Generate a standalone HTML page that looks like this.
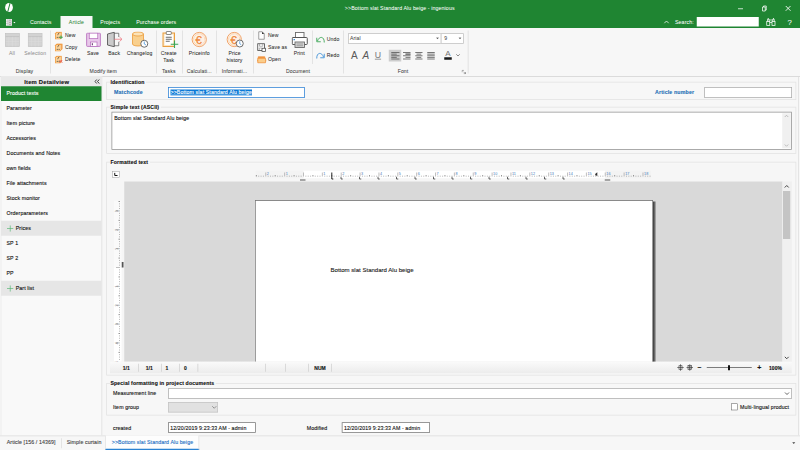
<!DOCTYPE html>
<html lang="en">
<head>
<meta charset="utf-8">
<title>&gt;&gt;Bottom slat Standard Alu beige - ingenious</title>
<style>
html,body{margin:0;padding:0;width:800px;height:450px;overflow:hidden;background:#f7f7f7}
#app{position:absolute;left:0;top:0;width:3200px;height:1800px;transform:scale(.25);transform-origin:0 0;background:#f7f7f7;font-family:"Liberation Sans",sans-serif;font-size:21px;letter-spacing:.4px;color:#111;-webkit-text-stroke:.45px;overflow:hidden}
#app *{box-sizing:border-box}
.a{position:absolute;white-space:nowrap;line-height:26px}
#rib .a{line-height:22px;font-size:20.5px;-webkit-text-stroke:.15px;color:#2a2a2a}
#hdr .a{-webkit-text-stroke:.1px}
.c{transform:translateX(-50%);text-align:center}
.b{font-weight:bold;letter-spacing:.6px}
.w{color:#fff}
.blue{color:#1f70b6}
.sep{position:absolute;width:3px;background:#dcdcdc}
#rib .rl{color:#3c3c3c}
#rib .gl{color:#8a8a8a;-webkit-text-stroke:0}
.inp{position:absolute;background:#fff;border:3px solid #ababab}
.nav{position:absolute;left:26px;line-height:28px;white-space:nowrap}
.gb{position:absolute;border:3px solid #e2e2e2}
.gt{position:absolute;background:#f7f7f7;font-weight:bold;font-size:20.5px;letter-spacing:.6px;line-height:24px;white-space:nowrap;padding:0 6px 0 2px;color:#0c0c0c}
</style>
</head>
<body>
<div id="app">
<!-- HEADER -->
<div id="hdr" class="a" style="left:0;top:0;width:3200px;height:112px;background:#1f8532">
<!-- logo -->
<svg class="a" style="left:18px;top:10px" width="36" height="40" viewBox="0 0 36 40"><ellipse cx="18" cy="20" rx="15.5" ry="18" fill="#fff"/><path d="M22.5 1 L12.5 39" stroke="#1f8532" stroke-width="4"/></svg>
<div class="a c w" style="left:1599px;top:20px">&gt;&gt;Bottom slat Standard Alu beige - ingenious</div>
<!-- window controls -->
<svg class="a" style="left:2940px;top:14px" width="240" height="44" viewBox="0 0 240 44" fill="none" stroke="#fff" stroke-width="3"><path d="M12 21h20"/><path d="M110 14h11v16h-11z"/><path d="M114 14v-4h11v16h-4"/><path d="M203 10l19 19M222 10l-19 19" stroke-width="3.5"/></svg>
<!-- app menu -->
<svg class="a" style="left:22px;top:74px" width="44" height="32" viewBox="0 0 44 32"><rect x="2" y="2" width="24" height="27" fill="#ececec"/><path d="M9 2v27M2 11h24M2 20h24" stroke="#b4b4b4" stroke-width="2"/><path d="M13 6.500h10M13 15.500h10M13 24.500h10" stroke="#8c8c8c" stroke-width="3"/><path d="M31 14h9l-4.500 4.500z" fill="#fff"/></svg>
<div class="a c w" style="left:163px;top:77px">Contacts</div>
<div class="a" style="left:242px;top:64px;width:128px;height:48px;background:#f7f7f7"></div>
<div class="a c" style="left:306px;top:77px;color:#1f8532">Article</div>
<div class="a c w" style="left:441px;top:77px">Projects</div>
<div class="a c w" style="left:625px;top:77px">Purchase orders</div>
<svg class="a" style="left:2654px;top:80px" width="24" height="16" viewBox="0 0 24 16" fill="none" stroke="#fff" stroke-width="3"><path d="M3 13l9-9 9 9"/></svg>
<div class="a w" style="left:2700px;top:77px">Search:</div>
<div class="a" style="left:2787px;top:68px;width:248px;height:38px;background:#fff"></div>
<svg class="a" style="left:3064px;top:68px" width="40" height="38" viewBox="0 0 40 38" fill="none" stroke="#fff" stroke-width="3"><rect x="3" y="18" width="12" height="16"/><rect x="24" y="18" width="12" height="16"/><path d="M6 18v-9h6v9M27 18v-9h6v9M15 22h9M9 9v-5M30 9v-5M12 12h15"/></svg>
<div class="a c w" style="left:3159px;top:74px;font-size:31px;line-height:30px">?</div>
</div>
<!-- RIBBON -->
<div id="rib" class="a" style="left:0;top:112px;width:3200px;height:195px;background:#f7f7f7;border-bottom:3px solid #d2d2d2">
<div style="position:absolute;left:0;top:-112px;width:3200px;height:304px">
<svg class="a" style="left:20px;top:132px" width="60" height="57" viewBox="0 0 60 57"><rect x="1.500" y="1.500" width="56" height="53" fill="#d3d3d3" stroke="#c0c0c0" stroke-width="2.500"/><path d="M2 14h55" stroke="#bdbdbd" stroke-width="2.500"/><path d="M3 24h53M3 34h53M3 44h53M15.500 15v39M29.500 15v39M43.500 15v39" stroke="#e0e0e0" stroke-width="1.600"/></svg>
<svg class="a" style="left:111px;top:132px" width="60" height="57" viewBox="0 0 60 57"><rect x="1.500" y="1.500" width="56" height="53" fill="#d3d3d3" stroke="#c0c0c0" stroke-width="2.500"/><path d="M2 14h55" stroke="#bdbdbd" stroke-width="2.500"/><path d="M3 24h53M3 34h53M3 44h53M15.500 15v39M29.500 15v39M43.500 15v39" stroke="#e0e0e0" stroke-width="1.600"/></svg>
<div class="a c gl" style="left:48px;top:202px">All</div>
<div class="a c gl" style="left:141px;top:202px">Selection</div>
<div class="a c rl" style="top:274px;left:98px">Display</div>
<div class="sep" style="left:201px;top:122px;height:172px"></div>
<svg class="a" style="left:218px;top:126px" width="36" height="32" viewBox="0 0 36 32"><path d="M2 7l6-6h21v23l-6 8h-21z" fill="#f19a40"/><path d="M5 9l4.500-4.500h16v18.500l-4 5.500h-16.500z" fill="#fad39a"/><path d="M12 13l7-6.500M9 23.500h4M16.500 23.500h4" stroke="#45382b" stroke-width="3.600"/><path d="M26 16v14M19 23h14" stroke="#3aa655" stroke-width="4"/></svg>
<svg class="a" style="left:218px;top:174px" width="36" height="32" viewBox="0 0 36 32"><path d="M2 7l6-6h21v23l-6 8h-21z" fill="#f19a40"/><path d="M5 9l4.500-4.500h16v18.500l-4 5.500h-16.500z" fill="#fad39a"/><path d="M12 13l7-6.500M9 23.500h4M16.500 23.500h4" stroke="#45382b" stroke-width="3.600"/><path d="M10 0h22v22l-4 4v-22h-22z" fill="#f0973c"/></svg>
<svg class="a" style="left:218px;top:222px" width="36" height="32" viewBox="0 0 36 32"><path d="M2 7l6-6h21v23l-6 8h-21z" fill="#f19a40"/><path d="M5 9l4.500-4.500h16v18.500l-4 5.500h-16.500z" fill="#fad39a"/><path d="M12 13l7-6.500M9 23.500h4M16.500 23.500h4" stroke="#45382b" stroke-width="3.600"/><path d="M20 18l11 11M31 18l-11 11" stroke="#e8534f" stroke-width="3.5"/></svg>
<div class="a" style="left:260px;top:130px">New</div>
<div class="a" style="left:260px;top:178px">Copy</div>
<div class="a" style="left:260px;top:226px">Delete</div>
<!-- save -->
<svg class="a" style="left:344px;top:130px" width="60" height="58" viewBox="0 0 60 58"><rect x="2.5" y="2.5" width="55" height="53" rx="3" fill="#e8c8ea" stroke="#b770be" stroke-width="3.5"/><rect x="13" y="2.5" width="34" height="22" fill="#fff" stroke="#b770be" stroke-width="3"/><rect x="18" y="38" width="26" height="17.5" fill="#fff" stroke="#b770be" stroke-width="3"/><rect x="23" y="43" width="5" height="8" fill="#7a4a80"/></svg>
<div class="a c" style="left:372px;top:202px">Save</div>
<!-- back -->
<svg class="a" style="left:426px;top:126px" width="68" height="64" viewBox="0 0 68 64"><path d="M30 7h19v15M49 41v16h-19" fill="none" stroke="#5f5f5f" stroke-width="3"/><path d="M4 10l27-7v58l-27-7z" fill="#cbcbcb" stroke="#555" stroke-width="3.5"/><path d="M31 31h30M52 22l10 9-10 9" fill="none" stroke="#ee7780" stroke-width="3"/></svg>
<div class="a c" style="left:457px;top:202px">Back</div>
<!-- changelog -->
<svg class="a" style="left:526px;top:126px" width="70" height="68" viewBox="0 0 70 68"><path d="M4 10v40a22 8 0 0 0 44 0v-40z" fill="#f9d08e" stroke="#eda145" stroke-width="3.5"/><ellipse cx="26" cy="10" rx="22" ry="8" fill="#fce3b8" stroke="#eda145" stroke-width="3.5"/><circle cx="51" cy="49" r="14" fill="#fff" stroke="#5a5a5a" stroke-width="3.5"/><path d="M51 40v10l7 4" fill="none" stroke="#3d8ed6" stroke-width="3"/></svg>
<div class="a c" style="left:558px;top:202px">Changelog</div>
<div class="a c rl" style="top:274px;left:413px">Modify item</div>
<div class="sep" style="left:625px;top:122px;height:172px"></div>
<!-- create task -->
<svg class="a" style="left:648px;top:122px" width="68" height="72" viewBox="0 0 68 72"><rect x="4" y="10" width="46" height="54" fill="#fbe3bd" stroke="#ea9d3f" stroke-width="4"/><rect x="10" y="16" width="34" height="42" fill="#fff"/><rect x="17" y="4" width="20" height="12" rx="2" fill="#fff" stroke="#666" stroke-width="3"/><path d="M15 27h24M15 35h24M15 43h16" stroke="#6b6b6b" stroke-width="4"/><path d="M50 40v30M35 55h30" stroke="#3aa655" stroke-width="4.5"/></svg>
<div class="a c" style="left:675px;top:202px">Create</div>
<div class="a c" style="left:675px;top:228px">Task</div>
<div class="a c rl" style="top:274px;left:675px">Tasks</div>
<div class="sep" style="left:729px;top:122px;height:172px"></div>
<!-- priceinfo -->
<svg class="a" style="left:762px;top:122px" width="70" height="70" viewBox="0 0 70 70"><circle cx="35" cy="36" r="28.5" fill="#fdf1e4" stroke="#ef9a5a" stroke-width="3.5"/><circle cx="35" cy="36" r="22.5" fill="none" stroke="#f3b07c" stroke-width="2.5" stroke-dasharray="3 2.5"/><text x="33" y="52" text-anchor="middle" font-family="Liberation Sans, sans-serif" font-size="46" fill="#ee8438" stroke="#ee8438" stroke-width="1">€</text></svg>
<div class="a c" style="left:797px;top:202px">Priceinfo</div>
<div class="a c rl" style="top:274px;left:797px">Calculati...</div>
<div class="sep" style="left:864px;top:122px;height:172px"></div>
<!-- price history -->
<svg class="a" style="left:902px;top:122px" width="80" height="74" viewBox="0 0 80 74"><circle cx="35" cy="36" r="28.5" fill="#fdf1e4" stroke="#ef9a5a" stroke-width="3.5"/><circle cx="35" cy="36" r="22.5" fill="none" stroke="#f3b07c" stroke-width="2.5" stroke-dasharray="3 2.5"/><text x="33" y="52" text-anchor="middle" font-family="Liberation Sans, sans-serif" font-size="46" fill="#ee8438" stroke="#ee8438" stroke-width="1">€</text><circle cx="57" cy="52" r="14" fill="#fff" stroke="#5a5a5a" stroke-width="3.5"/><path d="M57 43v10l6 4" fill="none" stroke="#3d8ed6" stroke-width="3"/></svg>
<div class="a c" style="left:938px;top:202px">Price</div>
<div class="a c" style="left:938px;top:228px">history</div>
<div class="a c rl" style="top:274px;left:938px">Informati...</div>
<div class="sep" style="left:1012px;top:122px;height:172px"></div>
<!-- document small icons -->
<svg class="a" style="left:1028px;top:124px" width="36" height="36" viewBox="0 0 36 36"><path d="M7 3h14l8 8v22h-22z" fill="#fff" stroke="#777" stroke-width="2.800"/><path d="M20 3l9 9h-9z" fill="#3c3c3c"/></svg>
<svg class="a" style="left:1028px;top:172px" width="38" height="38" viewBox="0 0 38 38"><rect x="3" y="3" width="27" height="27" fill="#fff" stroke="#444" stroke-width="3.200"/><path d="M10 4v9h13v-9" fill="none" stroke="#8a8a8a" stroke-width="2.500"/><path d="M9 29v-9h10" fill="none" stroke="#8a8a8a" stroke-width="2.500"/><rect x="20" y="21" width="14" height="13" fill="#fff" stroke="#444" stroke-width="3"/></svg>
<svg class="a" style="left:1028px;top:220px" width="38" height="36" viewBox="0 0 38 36"><path d="M5 7h26v8h-26z" fill="#f39a44" stroke="#ee8428" stroke-width="2.500"/><path d="M3 13h31v18h-31z" fill="#fbcd8a" stroke="#ee8a30" stroke-width="2.800"/><path d="M0 17l4 5-4 5zM38 17l-4 5 4 5z" fill="#f39a44"/></svg>
<div class="a" style="left:1072px;top:130px">New</div>
<div class="a" style="left:1072px;top:178px">Save as</div>
<div class="a" style="left:1072px;top:226px">Open</div>
<!-- print -->
<svg class="a" style="left:1166px;top:126px" width="66" height="68" viewBox="0 0 66 68"><rect x="16" y="4" width="34" height="22" fill="#fff" stroke="#666" stroke-width="3.5"/><rect x="3" y="24" width="60" height="28" rx="3" fill="#fff" stroke="#555" stroke-width="4"/><rect x="8" y="30" width="6" height="5" fill="#3d8ed6"/><rect x="14" y="42" width="38" height="22" fill="#d6d6d6" stroke="#666" stroke-width="3.5"/><path d="M20 50h26M20 57h26" stroke="#8a8a8a" stroke-width="3"/></svg>
<div class="a c" style="left:1197px;top:202px">Print</div>
<div class="sep" style="left:1249px;top:122px;height:134px"></div>
<svg class="a" style="left:1262px;top:138px" width="40" height="36" viewBox="0 0 40 36"><path d="M8 26C14 6 36 6 35 32" fill="none" stroke="#3aa655" stroke-width="3.6"/><path d="M5 13v16h16" fill="none" stroke="#3aa655" stroke-width="3.6"/></svg>
<svg class="a" style="left:1262px;top:202px" width="40" height="36" viewBox="0 0 40 36"><path d="M32 26C26 6 4 6 5 32" fill="none" stroke="#3d8ed6" stroke-width="3.6"/><path d="M35 13v16h-16" fill="none" stroke="#3d8ed6" stroke-width="3.6"/></svg>
<div class="a" style="left:1307px;top:146px">Undo</div>
<div class="a" style="left:1307px;top:208px">Redo</div>
<div class="a c rl" style="top:274px;left:1192px">Document</div>
<div class="sep" style="left:1372px;top:122px;height:172px"></div>
<!-- font group -->
<div class="a" style="left:1392px;top:133px;width:374px;height:42px;background:#fff;border:3px solid #bebebe"></div>
<div class="a" style="left:1763px;top:133px;width:92px;height:42px;background:#fff;border:3px solid #bebebe"></div>
<div class="a" style="left:1400px;top:141px;color:#444">Arial</div>
<div class="a" style="left:1777px;top:141px;color:#444">9</div>
<svg class="a" style="left:1743px;top:149px" width="14" height="9" viewBox="0 0 14 9"><path d="M1 1h12l-6 7z" fill="#555"/></svg>
<svg class="a" style="left:1833px;top:149px" width="14" height="9" viewBox="0 0 14 9"><path d="M1 1h12l-6 7z" fill="#555"/></svg>
<div class="a c" style="left:1417px;top:200px;font-size:40px;line-height:44px;letter-spacing:0;color:#5a5a5a">A</div>
<div class="a c" style="left:1463px;top:200px;font-size:40px;line-height:44px;letter-spacing:0;color:#5a5a5a;font-style:italic">A</div>
<div class="a c" style="left:1512px;top:200px;font-size:35px;line-height:35px;letter-spacing:0;color:#7a7a7a;border-bottom:3px solid #777">U</div>
<div class="a" style="left:1555px;top:199px;width:50px;height:47px;background:#cdcdcd"></div>
<svg class="a" style="left:1560px;top:204px" width="190" height="38" viewBox="0 0 190 38" stroke="#555" stroke-width="3.2"><path d="M5 6h33M5 12.5h22M5 19h33M5 25.5h22M5 32h33"/><path d="M52 6h30M62 12.5h20M52 19h30M62 12.5h20M62 25.5h20M52 32h30"/><path d="M101 6h29M106 12.5h19M101 19h29M106 25.5h19M101 32h29"/><path d="M149 6h30M149 12.5h30M149 19h30M149 25.5h30M149 32h30"/></svg>
<div class="a c" style="left:1792px;top:198px;font-size:32px;line-height:32px;letter-spacing:0;color:#777">A</div>
<div class="a" style="left:1777px;top:229px;width:30px;height:10px;background:#1a1a1a"></div>
<svg class="a" style="left:1822px;top:214px" width="20" height="14" viewBox="0 0 20 14" fill="none" stroke="#666" stroke-width="3"><path d="M3 3l7 7 7-7"/></svg>
<div class="a c rl" style="top:274px;left:1612px">Font</div>
<svg class="a" style="left:1846px;top:279px" width="18" height="18" viewBox="0 0 18 18" fill="none" stroke="#777" stroke-width="2.5"><path d="M2 10v-8h8M8 8l8 8M16 9v7h-7"/></svg>
<div class="sep" style="left:1871px;top:122px;height:172px"></div>
</div>
</div>
<!-- LEFT PANEL -->
<div id="left" class="a" style="left:3px;top:306px;width:406px;height:1436px;background:#f9f9f9;border-left:2px solid #e2e2e2;border-right:3px solid #dcdcdc">
<div class="a" style="left:-1px;top:0;width:402px;height:39px;background:#e9e9e9"></div>
<div class="a c b" style="left:182px;top:7px;color:#111;font-size:23.5px;letter-spacing:.7px">Item Detailview</div>
<svg class="a" style="left:372px;top:10px" width="24" height="20" viewBox="0 0 24 20" fill="none" stroke="#222" stroke-width="3.5"><path d="M10 2l-7 8 7 8M20 2l-7 8 7 8"/></svg>
<div class="a" style="left:-1px;top:39px;width:402px;height:59px;background:#1f8532"></div>
<div class="nav w" style="left:21px;top:54px">Product texts</div>
<div class="nav" style="left:21px;top:114px">Parameter</div>
<div class="nav" style="left:21px;top:174px">Item picture</div>
<div class="nav" style="left:21px;top:234px">Accessories</div>
<div class="nav" style="left:21px;top:294px">Documents and Notes</div>
<div class="nav" style="left:21px;top:354px">own fields</div>
<div class="nav" style="left:21px;top:414px">File attachments</div>
<div class="nav" style="left:21px;top:474px">Stock monitor</div>
<div class="nav" style="left:21px;top:534px">Orderparameters</div>
<div class="a" style="left:-1px;top:577px;width:402px;height:60px;background:#e6e6e6"></div>
<svg class="a" style="left:23px;top:595px" width="26" height="26" viewBox="0 0 26 26"><path d="M13 0v26M0 13h26" stroke="#52b370" stroke-width="2.6"/></svg>
<div class="nav" style="left:58px;top:594px">Prices</div>
<div class="nav" style="left:21px;top:654px">SP 1</div>
<div class="nav" style="left:21px;top:714px">SP 2</div>
<div class="nav" style="left:21px;top:774px">PP</div>
<div class="a" style="left:-1px;top:817px;width:402px;height:60px;background:#e6e6e6"></div>
<svg class="a" style="left:23px;top:835px" width="26" height="26" viewBox="0 0 26 26"><path d="M13 0v26M0 13h26" stroke="#52b370" stroke-width="2.6"/></svg>
<div class="nav" style="left:58px;top:834px">Part list</div>
</div>
<!-- MAIN -->
<div id="main" class="a" style="left:0;top:0;width:3200px;height:1800px">
<div class="a" style="left:3192px;top:307px;width:3px;height:1435px;background:#dedede"></div>
<!-- Identification -->
<div class="gb" style="left:425px;top:327px;width:2760px;height:73px"></div>
<div class="gt" style="left:440px;top:316px">Identification</div>
<div class="a b blue" style="left:456px;top:356px">Matchcode</div>
<div class="inp" style="left:672px;top:348px;width:547px;height:44px;border-color:#2a7fd4"></div>
<div class="a w" style="left:682px;top:358px;background:#0a78d6;line-height:24px;text-decoration:underline">&gt;&gt;Bottom slat Standard Alu beige</div>
<div class="a b blue" style="left:2620px;top:356px">Article number</div>
<div class="inp" style="left:2817px;top:348px;width:351px;height:44px"></div>
<!-- Simple text -->
<div class="gb" style="left:425px;top:427px;width:2760px;height:188px"></div>
<div class="gt" style="left:440px;top:416px">Simple text (ASCII)</div>
<div class="inp" style="left:446px;top:447px;width:2721px;height:152px;border-color:#8f8f8f"></div>
<div class="a" style="left:3129px;top:453px;width:34px;height:140px;background:#f0f0f0"></div>
<div class="a" style="left:457px;top:458px">Bottom slat Standard Alu beige</div>
<svg class="a" style="left:3134px;top:456px" width="24" height="136" viewBox="0 0 24 136" fill="none" stroke="#b5b5b5" stroke-width="3.5"><path d="M5 12l7-7 7 7M5 122l7 7 7-7"/></svg>
<!-- Formatted text -->
<div class="gb" style="left:425px;top:647px;width:2760px;height:855px"></div>
<div class="gt" style="left:440px;top:636px">Formatted text</div>
<div id="editor" class="a" style="left:440px;top:656px;width:2727px;height:837px;background:#f6f6f6"></div>
<div class="a" style="left:497px;top:726px;width:2633px;height:721px;background:#d9d9d9;overflow:hidden">
<div class="a" style="left:2113px;top:80px;width:14px;height:700px;background:linear-gradient(90deg,#2e2e2e,#5a5a5a 50%,rgba(120,120,120,.3))"></div>
<div class="a" style="left:523px;top:75px;width:1592px;height:700px;background:#fff;border:2.5px solid #3a3a3a;border-top:3.5px solid #666"></div>
<div class="a" style="left:825px;top:341px;font-size:24.2px;letter-spacing:0;line-height:28px;color:#222">Bottom slat Standard Alu beige</div>
</div>
<div class="a" style="left:449px;top:684px;width:30px;height:27px;background:#fff;border:2.5px solid #9a9a9a"></div>
<svg class="a" style="left:456px;top:690px" width="16" height="16" viewBox="0 0 16 16"><path d="M3 1v11h11" fill="none" stroke="#111" stroke-width="4"/></svg>
<svg id="hruler" class="a" style="left:1000px;top:660px" width="1640" height="66" viewBox="0 0 1640 66"><rect x="214.0" y="23" width="1207.0" height="30" fill="#fff"/><rect x="22" y="23" width="192.0" height="30" fill="#f3f3f3"/><rect x="1421.0" y="23" width="183.0" height="30" fill="#f3f3f3"/><path d="M34.8 43V46M44.3 43V46M53.7 43V46M72.6 43V46M82.0 43V46M91.4 43V46M110.3 43V46M119.7 43V46M129.1 43V46M148.0 43V46M157.4 43V46M166.8 43V46M185.7 43V46M195.1 43V46M204.6 43V46M223.4 43V46M232.9 43V46M242.3 43V46M261.1 43V46M270.6 43V46M280.0 43V46M298.9 43V46M308.3 43V46M317.7 43V46M336.6 43V46M346.0 43V46M355.4 43V46M374.3 43V46M383.7 43V46M393.2 43V46M412.0 43V46M421.5 43V46M430.9 43V46M449.8 43V46M459.2 43V46M468.6 43V46M487.5 43V46M496.9 43V46M506.3 43V46M525.2 43V46M534.6 43V46M544.0 43V46M562.9 43V46M572.3 43V46M581.8 43V46M600.6 43V46M610.1 43V46M619.5 43V46M638.3 43V46M647.8 43V46M657.2 43V46M676.1 43V46M685.5 43V46M694.9 43V46M713.8 43V46M723.2 43V46M732.6 43V46M751.5 43V46M760.9 43V46M770.4 43V46M789.2 43V46M798.7 43V46M808.1 43V46M826.9 43V46M836.4 43V46M845.8 43V46M864.7 43V46M874.1 43V46M883.5 43V46M902.4 43V46M911.8 43V46M921.2 43V46M940.1 43V46M949.5 43V46M959.0 43V46M977.8 43V46M987.3 43V46M996.7 43V46M1015.5 43V46M1025.0 43V46M1034.4 43V46M1053.3 43V46M1062.7 43V46M1072.1 43V46M1091.0 43V46M1100.4 43V46M1109.8 43V46M1128.7 43V46M1138.1 43V46M1147.6 43V46M1166.4 43V46M1175.9 43V46M1185.3 43V46M1204.2 43V46M1213.6 43V46M1223.0 43V46M1241.9 43V46M1251.3 43V46M1260.7 43V46M1279.6 43V46M1289.0 43V46M1298.5 43V46M1317.3 43V46M1326.7 43V46M1336.2 43V46M1355.0 43V46M1364.5 43V46M1373.9 43V46M1392.8 43V46M1402.2 43V46M1411.6 43V46M1430.5 43V46M1439.9 43V46M1449.3 43V46M1468.2 43V46M1477.6 43V46M1487.0 43V46M1505.9 43V46M1515.3 43V46M1524.8 43V46M1543.6 43V46M1553.1 43V46M1562.5 43V46M1581.3 43V46M1590.8 43V46M1600.2 43V46" stroke="#666" stroke-width="2.5"/><path d="M25.4 40V46M100.8 40V46M176.3 40V46M251.7 40V46M327.2 40V46M402.6 40V46M478.0 40V46M553.5 40V46M628.9 40V46M704.4 40V46M779.8 40V46M855.2 40V46M930.7 40V46M1006.1 40V46M1081.6 40V46M1157.0 40V46M1232.4 40V46M1307.9 40V46M1383.3 40V46M1458.8 40V46M1534.2 40V46" stroke="#555" stroke-width="2.5"/><path d="M63.1 30V46M138.6 30V46M214.0 30V46M289.4 30V46M364.9 30V46M440.3 30V46M515.8 30V46M591.2 30V46M666.6 30V46M742.1 30V46M817.5 30V46M893.0 30V46M968.4 30V46M1043.8 30V46M1119.3 30V46M1194.7 30V46M1270.2 30V46M1345.6 30V46M1421.0 30V46M1496.5 30V46M1571.9 30V46" stroke="#999" stroke-width="2.5"/><g font-family="Liberation Sans, sans-serif" font-size="15" fill="#3f78b8"><text x="67.1" y="38">2</text><text x="142.6" y="38">1</text><text x="293.4" y="38">1</text><text x="368.9" y="38">2</text><text x="444.3" y="38">3</text><text x="519.8" y="38">4</text><text x="595.2" y="38">5</text><text x="670.6" y="38">6</text><text x="746.1" y="38">7</text><text x="821.5" y="38">8</text><text x="897.0" y="38">9</text><text x="972.4" y="38">10</text><text x="1047.8" y="38">11</text><text x="1123.3" y="38">12</text><text x="1198.7" y="38">13</text><text x="1274.2" y="38">14</text><text x="1349.6" y="38">15</text><text x="1425.0" y="38">16</text><text x="1500.5" y="38">17</text><text x="1575.9" y="38">18</text></g><path d="M364.0 47v9h7M438.0 47v9h7M512.0 47v9h7M586.0 47v9h7M660.0 47v9h7M734.0 47v9h7M808.0 47v9h7M882.0 47v9h7M956.0 47v9h7M1030.0 47v9h7M1104.0 47v9h7M1178.0 47v9h7M1252.0 47v9h7" fill="none" stroke="#333" stroke-width="3"/><path d="M327.2 30v26h6" fill="none" stroke="#222" stroke-width="4"/><path d="M200.0 60h22" stroke="#555" stroke-width="4"/><path d="M1379.3 37l10-8v16z" fill="#333"/><path d="M1419.0 60h22" stroke="#555" stroke-width="4"/></svg><svg id="vruler" class="a" style="left:440px;top:802px" width="57" height="645" viewBox="0 0 57 645"><rect x="16" y="0" width="30" height="268" fill="#fafafa"/><rect x="16" y="268" width="30" height="377" fill="#fff"/><path d="M37 13.4H40M37 22.8H40M37 32.2H40M37 51.1H40M37 60.5H40M37 70.0H40M37 88.8H40M37 98.3H40M37 107.7H40M37 126.6H40M37 136.0H40M37 145.4H40M37 164.3H40M37 173.7H40M37 183.1H40M37 202.0H40M37 211.4H40M37 220.8H40M37 239.7H40M37 249.1H40M37 258.6H40M37 277.4H40M37 286.9H40M37 296.3H40M37 315.1H40M37 324.6H40M37 334.0H40M37 352.9H40M37 362.3H40M37 371.7H40M37 390.6H40M37 400.0H40M37 409.4H40M37 428.3H40M37 437.7H40M37 447.2H40M37 466.0H40M37 475.5H40M37 484.9H40M37 503.8H40M37 513.2H40M37 522.6H40M37 541.5H40M37 550.9H40M37 560.3H40M37 579.2H40M37 588.6H40M37 598.0H40M37 616.9H40M37 626.3H40M37 635.8H40" stroke="#666" stroke-width="2.5"/><path d="M34 4.0H40M34 79.4H40M34 154.8H40M34 230.3H40M34 305.7H40M34 381.2H40M34 456.6H40M34 532.0H40M34 607.5H40" stroke="#555" stroke-width="2.5"/><path d="M24 41.7H40M24 117.1H40M24 192.6H40M24 268.0H40M24 343.4H40M24 418.9H40M24 494.3H40M24 569.8H40" stroke="#999" stroke-width="2.5"/><g font-family="Liberation Sans, sans-serif" font-size="15" fill="#666"><text transform="translate(32 46.7) rotate(-90)">3</text><text transform="translate(32 122.1) rotate(-90)">2</text><text transform="translate(32 197.6) rotate(-90)">1</text><text transform="translate(32 348.4) rotate(-90)">1</text><text transform="translate(32 423.9) rotate(-90)">2</text><text transform="translate(32 499.3) rotate(-90)">3</text><text transform="translate(32 574.8) rotate(-90)">4</text><text transform="translate(32 650.2) rotate(-90)">5</text></g><rect x="47" y="246.0" width="7" height="22" fill="#555"/></svg>
<div class="a" style="left:3130px;top:726px;width:37px;height:721px;background:#f0f0f0"></div>
<div class="a" style="left:3132px;top:764px;width:29px;height:192px;background:#c4c4c4"></div>
<svg class="a" style="left:3135px;top:738px" width="24" height="14" viewBox="0 0 24 14" fill="none" stroke="#444" stroke-width="4"><path d="M4 12l8-8 8 8"/></svg>
<svg class="a" style="left:3135px;top:1425px" width="24" height="14" viewBox="0 0 24 14" fill="none" stroke="#444" stroke-width="4"><path d="M4 2l8 8 8-8"/></svg>
<!-- editor status bar -->
<div class="a" style="left:440px;top:1447px;width:2727px;height:46px;background:linear-gradient(#fafafa,#ececec)"></div>
<div class="a c b" style="left:505px;top:1460px;font-size:20px;letter-spacing:.3px">1/1</div>
<div class="a c b" style="left:597px;top:1460px;font-size:20px;letter-spacing:.3px">1/1</div>
<div class="a c b" style="left:668px;top:1460px;font-size:20px;letter-spacing:.3px">1</div>
<div class="a c b" style="left:742px;top:1460px;font-size:20px;letter-spacing:.3px">0</div>
<div class="a c b" style="left:1280px;top:1460px;font-size:20px;letter-spacing:.3px">NUM</div>
<div class="sep" style="left:552px;top:1455px;height:32px;background:#d0d0d0"></div>
<div class="sep" style="left:644px;top:1455px;height:32px;background:#d0d0d0"></div>
<div class="sep" style="left:716px;top:1455px;height:32px;background:#d0d0d0"></div>
<div class="sep" style="left:790px;top:1455px;height:32px;background:#d0d0d0"></div>
<div class="sep" style="left:1061px;top:1455px;height:32px;background:#d0d0d0"></div>
<div class="sep" style="left:1141px;top:1455px;height:32px;background:#d0d0d0"></div>
<div class="sep" style="left:1232px;top:1455px;height:32px;background:#d0d0d0"></div>
<div class="sep" style="left:1324px;top:1455px;height:32px;background:#d0d0d0"></div>
<svg class="a" style="left:2708px;top:1456px" width="70" height="28" viewBox="0 0 70 28" fill="none" stroke="#333" stroke-width="2.5"><rect x="8" y="7" width="12" height="14" fill="#fff"/><path d="M14 1v26M1 14h26"/><rect x="44" y="6" width="14" height="16" fill="#fff"/><path d="M51 1v26M38 14h26M47 11h8M47 17h8"/></svg>
<div class="a c b" style="left:2797px;top:1456px;font-size:28px">−</div>
<div class="a" style="left:2827px;top:1469px;width:180px;height:3px;background:#555"></div>
<div class="a" style="left:2912px;top:1461px;width:8px;height:20px;background:#111"></div>
<div class="a c b" style="left:3037px;top:1456px;font-size:28px">+</div>
<div class="a c b" style="left:3102px;top:1460px;font-size:20px;letter-spacing:.3px">100%</div>

<!-- Special formatting -->
<div class="gb" style="left:425px;top:1532px;width:2760px;height:130px"></div>
<div class="gt" style="left:440px;top:1520px">Special formatting in project documents</div>
<div class="a" style="left:452px;top:1559px">Measurement line</div>
<div class="inp" style="left:672px;top:1553px;width:2496px;height:42px"></div>
<svg class="a" style="left:3136px;top:1567px" width="24" height="16" viewBox="0 0 24 16" fill="none" stroke="#3c3c3c" stroke-width="3.2"><path d="M4 3l8 8 8-8"/></svg>
<div class="a" style="left:452px;top:1616px">Item group</div>
<div class="inp" style="left:672px;top:1608px;width:200px;height:42px;background:#e1e1e1;border-color:#c4c4c4"></div>
<svg class="a" style="left:845px;top:1622px" width="24" height="16" viewBox="0 0 24 16" fill="none" stroke="#777" stroke-width="3"><path d="M4 3l8 8 8-8"/></svg>
<div class="inp" style="left:2924px;top:1614px;width:27px;height:27px;border-color:#555;border-width:2.5px"></div>
<div class="a" style="left:2960px;top:1615px">Multi-lingual product</div>
<div class="a" style="left:452px;top:1699px">created</div>
<div class="inp" style="left:672px;top:1689px;width:351px;height:42px;border-color:#777"></div>
<div class="a" style="left:681px;top:1698px">12/20/2019 9:23:33 AM - admin</div>
<div class="a" style="left:1227px;top:1699px">Modified</div>
<div class="inp" style="left:1367px;top:1689px;width:353px;height:42px;border-color:#777"></div>
<div class="a" style="left:1376px;top:1698px">12/20/2019 9:23:33 AM - admin</div>
</div>
<!-- BOTTOM -->
<div id="bot" class="a" style="left:0;top:1742px;width:3200px;height:58px;background:#f7f7f7;border-top:3px solid #dcdcdc">
<div class="a" style="left:27px;top:11px;color:#444">Article [156 / 14369]</div>
<div class="sep" style="left:244px;top:8px;height:40px"></div>
<div class="a" style="left:267px;top:11px;color:#444">Simple curtain</div>
<div class="a" style="left:420px;top:-3px;width:377px;height:61px;background:#fdfdfd;border-bottom:8px solid #2a82d2;border-left:3px solid #e0e0e0;border-right:3px solid #e0e0e0"></div>
<div class="a" style="left:447px;top:11px;color:#1c6fc4">&gt;&gt;Bottom slat Standard Alu beige</div>
<svg class="a" style="left:3166px;top:22px" width="18" height="12" viewBox="0 0 18 12"><path d="M3 2h12l-6 7z" fill="#444"/></svg>
</div>
</div>
</body>
</html>
